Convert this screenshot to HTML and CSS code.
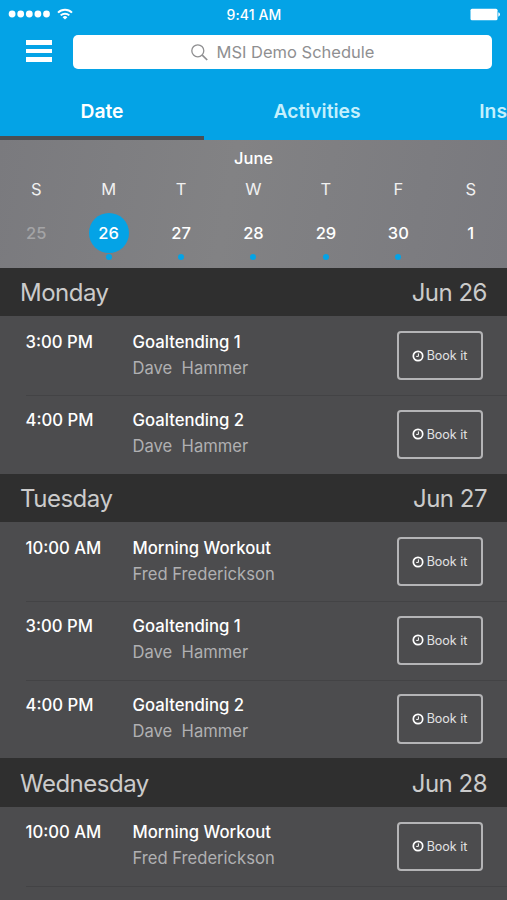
FILE: index.html
```html
<!DOCTYPE html>
<html lang="en">
<head>
    <meta charset="UTF-8">
    <meta name="viewport" content="width=device-width, initial-scale=1.0">
    <title>MSI Demo Schedule</title>
    <link rel="stylesheet" href="styles.css">
</head>
<body>
    <svg class="symbols">
        <symbol id="clock" viewBox="0 0 12 12">
            <circle cx="6" cy="6" r="4.7" fill="none" stroke="currentColor" stroke-width="1.7"/>
            <path d="M6.4 3.4v3H4.2" fill="none" stroke="currentColor" stroke-width="1"/>
        </symbol>
    </svg>

    <header class="header">
        <div class="status">
            <div class="signal">
                <svg width="42" height="8" viewBox="0 0 42 8" fill="#fff">
                    <circle cx="4.1" cy="4" r="3.4"/>
                    <circle cx="12.7" cy="4" r="3.4"/>
                    <circle cx="21.3" cy="4" r="3.4"/>
                    <circle cx="29.9" cy="4" r="3.4"/>
                    <circle cx="38.5" cy="4" r="3.4"/>
                </svg>
                <svg class="wifi" width="16" height="12" viewBox="0 0 16 12" fill="none" stroke="#fff" stroke-width="2">
                    <path d="M1 4.6a10 10 0 0 1 14 0"/>
                    <path d="M3.7 7.4a6.1 6.1 0 0 1 8.6 0"/>
                    <path d="M8 11.5L5.6 9.2a3.4 3.4 0 0 1 4.8 0z" fill="#fff" stroke="none"/>
                </svg>
            </div>
            <span class="clock">9:41 AM</span>
            <svg class="battery" width="30" height="13" viewBox="0 0 30 13" fill="#fff">
                <rect x="0.5" y="0.8" width="27" height="11.4" rx="1.5"/>
                <path d="M28.3 4.3q1.7.6 1.7 2.2t-1.7 2.2z"/>
            </svg>
        </div>

        <div class="topbar">
            <div class="menu">
                <span></span>
                <span></span>
                <span></span>
            </div>
            <div class="search">
                <svg width="17" height="17" viewBox="0 0 17 17" fill="none" stroke="#8f8f91">
                    <circle cx="6.8" cy="6.8" r="6" stroke-width="1.3"/>
                    <path d="M11.2 11.2l5 4.8" stroke-width="1.7"/>
                </svg>
                <span>MSI Demo Schedule</span>
            </div>
        </div>

        <nav class="tabs">
            <div class="tab active">Date</div>
            <div class="tab wide">Activities</div>
            <div class="tab last">Ins</div>
        </nav>
    </header>

    <section class="calendar">
        <div class="month">June</div>
        <div class="week names">
            <span>S</span><span>M</span><span>T</span><span>W</span><span>T</span><span>F</span><span>S</span>
        </div>
        <div class="week days">
            <div class="day past"><b>25</b></div>
            <div class="day selected dot"><b>26</b></div>
            <div class="day dot"><b>27</b></div>
            <div class="day dot"><b>28</b></div>
            <div class="day dot"><b>29</b></div>
            <div class="day dot"><b>30</b></div>
            <div class="day"><b>1</b></div>
        </div>
    </section>

    <main class="schedule">
        <h2 class="date"><span>Monday</span><span>Jun 26</span></h2>
        <div class="row">
            <div class="time">3:00 PM</div>
            <div class="info">
                <div class="title">Goaltending 1</div>
                <div class="coach">Dave&nbsp; Hammer</div>
            </div>
            <button class="book"><svg><use href="#clock"/></svg>Book it</button>
        </div>
        <div class="row">
            <div class="time">4:00 PM</div>
            <div class="info">
                <div class="title">Goaltending 2</div>
                <div class="coach">Dave&nbsp; Hammer</div>
            </div>
            <button class="book"><svg><use href="#clock"/></svg>Book it</button>
        </div>

        <h2 class="date"><span>Tuesday</span><span>Jun 27</span></h2>
        <div class="row">
            <div class="time">10:00 AM</div>
            <div class="info">
                <div class="title">Morning Workout</div>
                <div class="coach">Fred Frederickson</div>
            </div>
            <button class="book"><svg><use href="#clock"/></svg>Book it</button>
        </div>
        <div class="row">
            <div class="time">3:00 PM</div>
            <div class="info">
                <div class="title">Goaltending 1</div>
                <div class="coach">Dave&nbsp; Hammer</div>
            </div>
            <button class="book"><svg><use href="#clock"/></svg>Book it</button>
        </div>
        <div class="row">
            <div class="time">4:00 PM</div>
            <div class="info">
                <div class="title">Goaltending 2</div>
                <div class="coach">Dave&nbsp; Hammer</div>
            </div>
            <button class="book"><svg><use href="#clock"/></svg>Book it</button>
        </div>

        <h2 class="date"><span>Wednesday</span><span>Jun 28</span></h2>
        <div class="row">
            <div class="time">10:00 AM</div>
            <div class="info">
                <div class="title">Morning Workout</div>
                <div class="coach">Fred Frederickson</div>
            </div>
            <button class="book"><svg><use href="#clock"/></svg>Book it</button>
        </div>
        <div class="divider"></div>
    </main>
</body>
</html>
```

FILE: styles.css
```css
*{
    margin: 0;
    padding: 0;
    box-sizing: border-box;
}
body{
    height: 900px;
    overflow: hidden;
    background-color: #4c4c4e;
    color: #fff;
    font-family: Inter, "Liberation Sans", sans-serif;
}
.symbols{
    position: absolute;
    width: 0;
    height: 0;
}
.header{
    height: 140px;
    background-color: #04a3e6;
}
.status{
    display: grid;
    grid-template-columns: 1fr auto 1fr;
    align-items: center;
    height: 28px;
    padding: 0 7px 0 8px;
}
.signal{
    display: flex;
    align-items: center;
    gap: 7px;
}
.clock{
    font-size: 14px;
    font-weight: 500;
    letter-spacing: 0.1px;
}
.battery{
    justify-self: end;
}
.topbar{
    display: flex;
    padding: 7px 15px 0 26px;
}
.menu{
    display: flex;
    flex-direction: column;
    gap: 4px;
    width: 47px;
    padding-top: 5px;
}
.menu span{
    width: 26px;
    height: 4.6px;
    background-color: #fff;
}
.search{
    flex: 1;
    display: flex;
    align-items: center;
    justify-content: center;
    gap: 9px;
    height: 34px;
    border-radius: 5px;
    background-color: #fff;
    color: #8f8f91;
    font-size: 16.5px;
}
.tabs{
    display: flex;
    height: 71px;
    overflow: hidden;
    font-size: 19.3px;
    font-weight: 600;
}
.tab{
    flex: none;
    width: 204px;
    height: 71px;
    padding-top: 13px;
    border-bottom: 4px solid transparent;
    line-height: 58px;
    text-align: center;
    color: #c5f0fd;
}
.tab.active{
    color: #fff;
    border-color: #4a4f54;
}
.tab.wide{
    width: 226px;
}
.tab.last{
    width: 77px;
    text-align: right;
}
.calendar{
    height: 127.6px;
    padding-top: 8px;
    background: linear-gradient(100deg, #7a7a7e, #828284 45%, #79797e);
}
.month{
    text-align: center;
    font-size: 16.5px;
    line-height: 20px;
    font-weight: 500;
}
.week{
    display: grid;
    grid-template-columns: repeat(7, 1fr);
    text-align: center;
    font-size: 16.5px;
}
.names{
    padding-top: 11px;
    line-height: 20px;
    color: #f0f0f0;
}
.days{
    padding-top: 14px;
}
.day b{
    display: block;
    width: 40px;
    margin: 0 auto;
    line-height: 40px;
    border-radius: 50%;
    font-weight: 500;
}
.past{
    color: #a4a4a6;
}
.selected b{
    background-color: #04a3e6;
}
.dot::after{
    content: "";
    display: block;
    width: 6px;
    height: 6px;
    margin: 1px auto 0;
    border-radius: 50%;
    background-color: #04a3e6;
}
.date{
    display: flex;
    justify-content: space-between;
    align-items: center;
    height: 48.8px;
    padding: 1px 20px 0;
    background-color: #2f2f2f;
    color: #cbcbcb;
    font-size: 24px;
    font-weight: 400;
    letter-spacing: -0.5px;
}
.row{
    display: flex;
    height: 78.6px;
    padding: 14.6px 24px 0 25.5px;
}
.row + .row, .divider{
    background: linear-gradient(#434345, #434345) 26px 0 / 100% 1px no-repeat;
}
.divider{
    height: 10px;
}
.time{
    width: 107px;
    padding-top: 0.6px;
    font-size: 16.7px;
    line-height: 20px;
    font-weight: 500;
}
.info{
    flex: 1;
    padding-top: 0.6px;
    font-size: 16.7px;
}
.title{
    line-height: 20px;
    font-weight: 500;
}
.coach{
    margin-top: 6px;
    line-height: 20px;
    color: #b0b0b2;
    font-size: 16.6px;
}
.book{
    display: flex;
    align-items: center;
    justify-content: center;
    gap: 2.5px;
    width: 86.5px;
    height: 49.4px;
    border: 2px solid #b4b4b6;
    border-radius: 4px;
    background: none;
    color: #e2e2e3;
    font-family: inherit;
    font-size: 12.5px;
}
.book svg{
    width: 12px;
    height: 12px;
    color: #fff;
}
```
